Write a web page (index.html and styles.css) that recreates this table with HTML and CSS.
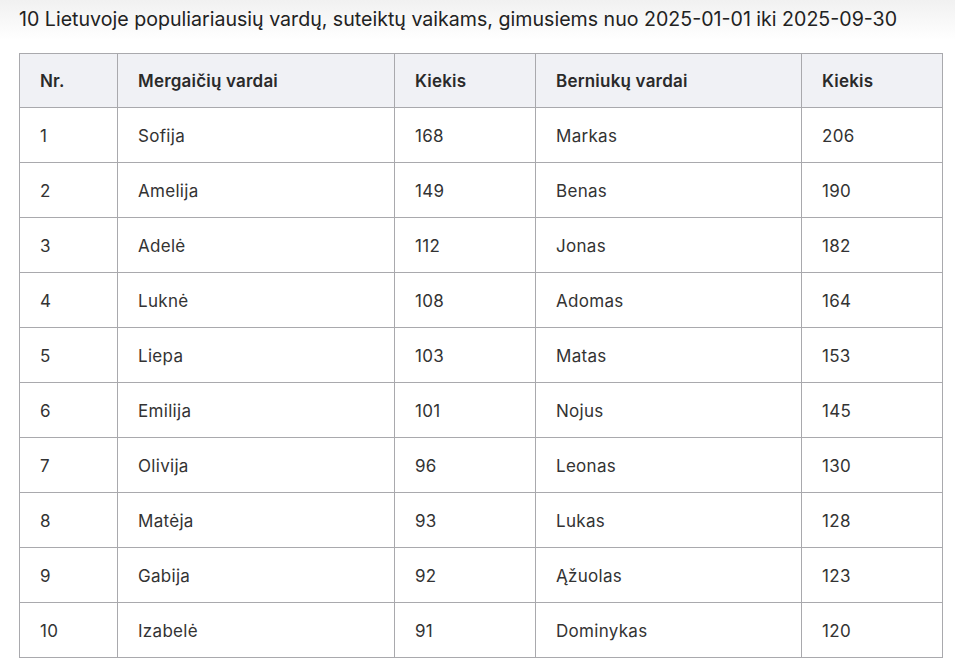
FILE: index.html
```html
<!DOCTYPE html>
<html lang="lt">
<head>
<meta charset="utf-8">
<link rel="stylesheet" href="styles.css">
</head>
<body>
<div class="page">
  <p class="title">10 Lietuvoje populiariausių vardų, suteiktų vaikams, gimusiems nuo 2025-01-01 iki 2025-09-30</p>
  <table class="names">
    <thead>
      <tr><th class="c1">Nr.</th><th class="c2">Mergaičių vardai</th><th class="c3">Kiekis</th><th class="c4">Berniukų vardai</th><th class="c5">Kiekis</th></tr>
    </thead>
    <tbody>
      <tr><td>1</td><td>Sofija</td><td>168</td><td>Markas</td><td>206</td></tr>
      <tr><td>2</td><td>Amelija</td><td>149</td><td>Benas</td><td>190</td></tr>
      <tr><td>3</td><td>Adelė</td><td>112</td><td>Jonas</td><td>182</td></tr>
      <tr><td>4</td><td>Luknė</td><td>108</td><td>Adomas</td><td>164</td></tr>
      <tr><td>5</td><td>Liepa</td><td>103</td><td>Matas</td><td>153</td></tr>
      <tr><td>6</td><td>Emilija</td><td>101</td><td>Nojus</td><td>145</td></tr>
      <tr><td>7</td><td>Olivija</td><td>96</td><td>Leonas</td><td>130</td></tr>
      <tr><td>8</td><td>Matėja</td><td>93</td><td>Lukas</td><td>128</td></tr>
      <tr><td>9</td><td>Gabija</td><td>92</td><td>Ąžuolas</td><td>123</td></tr>
      <tr><td>10</td><td>Izabelė</td><td>91</td><td>Dominykas</td><td>120</td></tr>
    </tbody>
  </table>
</div>
</body>
</html>
```
FILE: styles.css
```css
html, body {
  margin: 0;
  padding: 0;
  background: #fff;
}
body {
  font-family: "Inter", "Noto Sans", sans-serif;
  color: #2b2b2b;
}
.page {
  background: linear-gradient(to bottom, #f1f1f1 0px, #ffffff 40px);
  padding: 0 13px 0 19px;
}
.title {
  margin: 0;
  padding-top: 6px;
  height: 47px;
  font-size: 19.6px;
  line-height: 26px;
  color: #222;
  white-space: nowrap;
}
.names {
  border-collapse: collapse;
  width: 924px;
  font-size: 17px;
  letter-spacing: 0.3px;
}
.names th, .names td {
  border: 1px solid #a9a9ad;
  padding: 2px 20px 0;
  height: 52px;
  text-align: left;
  vertical-align: middle;
}
.names th {
  padding-top: 0;
  height: 53px;
  background: #f0f1f5;
  font-weight: 600;
  letter-spacing: 0.2px;
  color: #2a2a2a;
}
.names td {
  color: #333;
}
.c1 { width: 57px; }
.c2 { width: 236px; }
.c3 { width: 100px; }
.c4 { width: 225px; }
.c5 { width: 100px; }
```
